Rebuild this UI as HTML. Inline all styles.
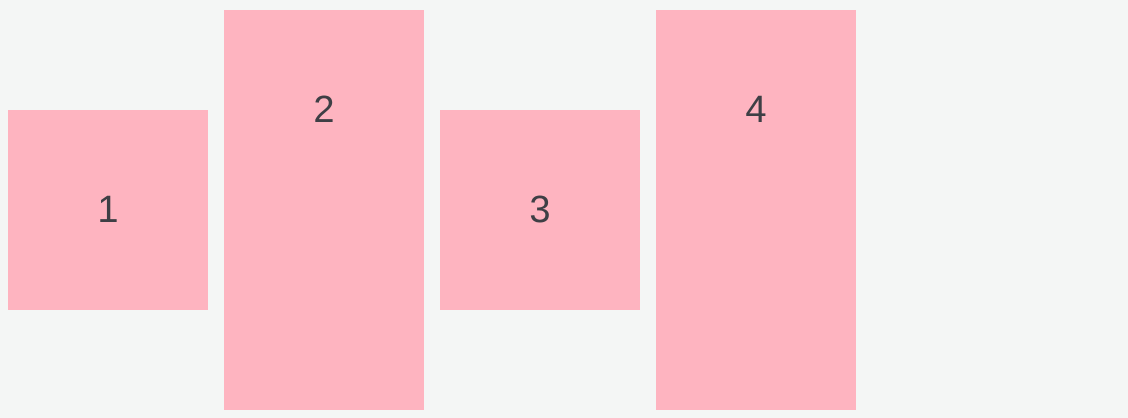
<!DOCTYPE html>
<html><head><style>
html,body{margin:0;padding:0;background:#f4f6f5;width:1128px;height:418px;overflow:hidden}
.b{position:absolute;width:200px;background:#feb4c0;color:#3e3f45;font-family:"Liberation Sans",sans-serif;font-size:38px;text-align:center;line-height:200px}
</style></head><body>
<div class="b" style="left:8px;top:110px;height:200px">1</div>
<div class="b" style="left:224px;top:10px;height:400px">2</div>
<div class="b" style="left:440px;top:110px;height:200px">3</div>
<div class="b" style="left:656px;top:10px;height:400px">4</div>
</body></html>
